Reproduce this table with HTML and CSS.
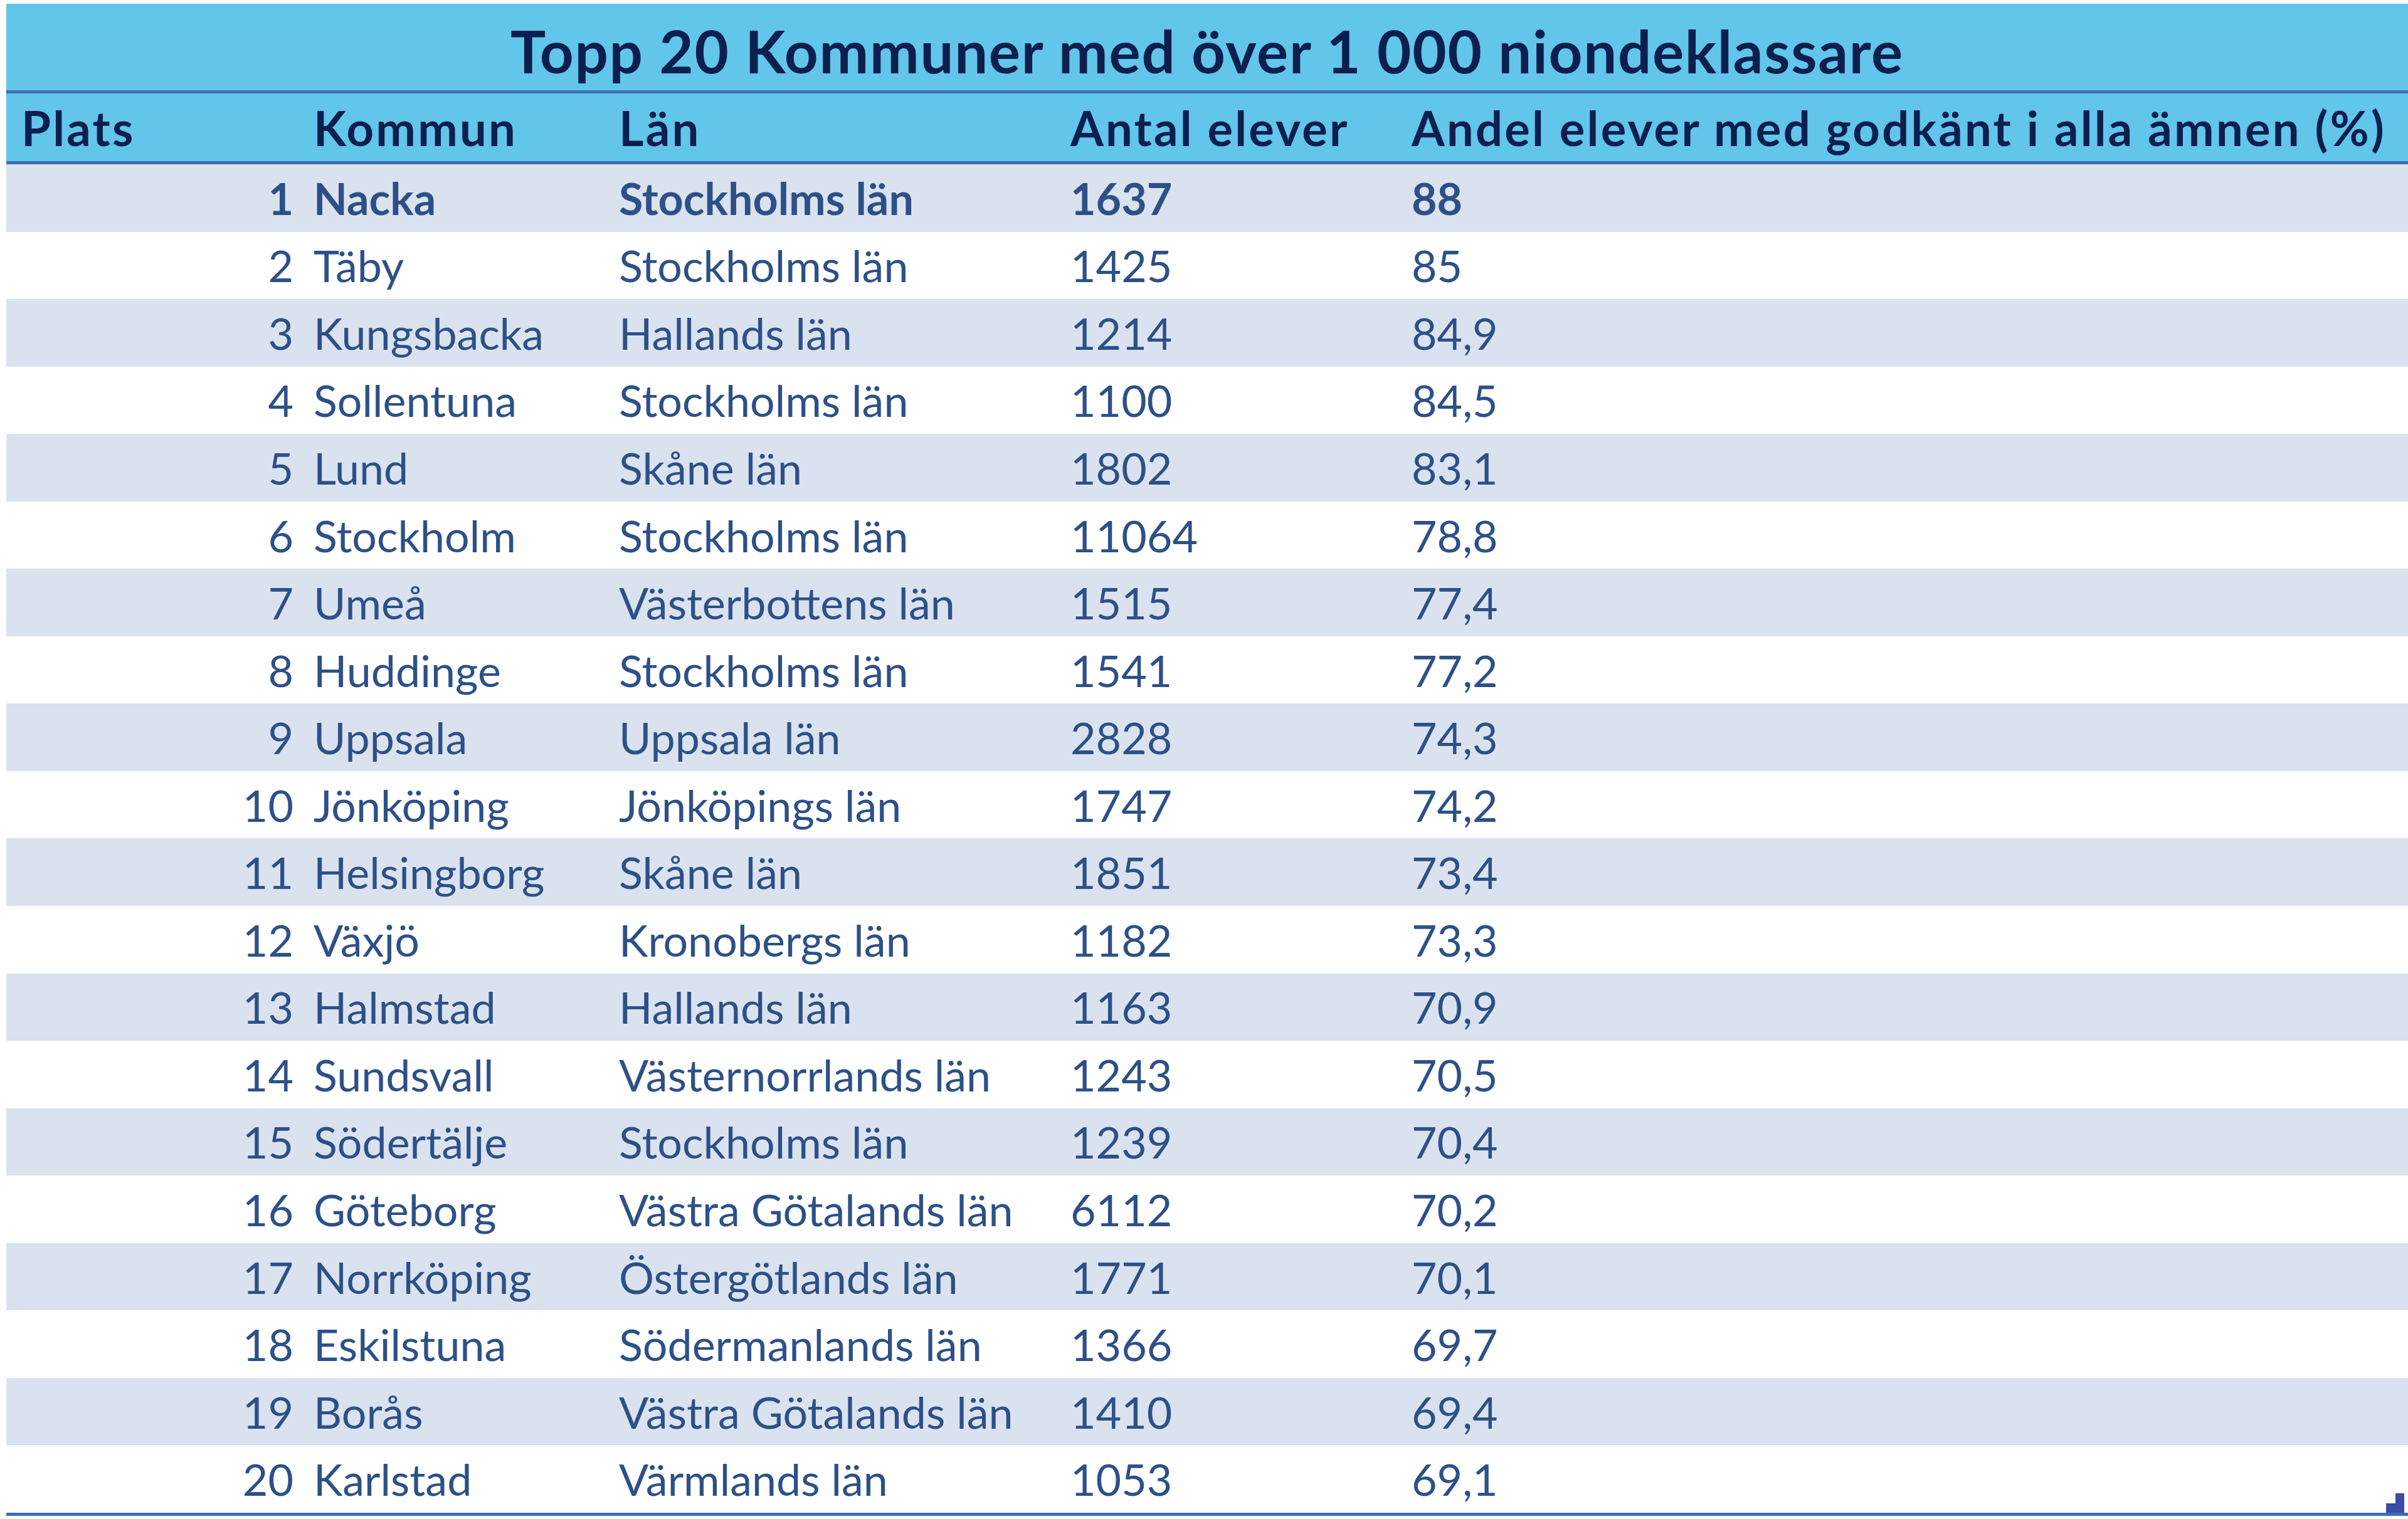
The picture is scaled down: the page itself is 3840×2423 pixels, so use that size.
FILE: index.html
```html
<!DOCTYPE html>
<html lang="sv">
<head>
<meta charset="utf-8">
<title>Topp 20 Kommuner med över 1 000 niondeklassare</title>
<link rel="stylesheet" href="styles.css">
</head>
<body>
<div class="sheet">
  <div class="title">Topp 20 Kommuner med över 1 000 niondeklassare</div>
  <div class="row head">
    <div class="cell plats">Plats</div>
    <div class="cell">Kommun</div>
    <div class="cell">Län</div>
    <div class="cell">Antal elever</div>
    <div class="cell">Andel elever med godkänt i alla ämnen (%)</div>
  </div>
  <div class="row band strong"><div class="cell num">1</div><div class="cell">Nacka</div><div class="cell">Stockholms län</div><div class="cell">1637</div><div class="cell">88</div></div>
  <div class="row"><div class="cell num">2</div><div class="cell">Täby</div><div class="cell">Stockholms län</div><div class="cell">1425</div><div class="cell">85</div></div>
  <div class="row band"><div class="cell num">3</div><div class="cell">Kungsbacka</div><div class="cell">Hallands län</div><div class="cell">1214</div><div class="cell">84,9</div></div>
  <div class="row"><div class="cell num">4</div><div class="cell">Sollentuna</div><div class="cell">Stockholms län</div><div class="cell">1100</div><div class="cell">84,5</div></div>
  <div class="row band"><div class="cell num">5</div><div class="cell">Lund</div><div class="cell">Skåne län</div><div class="cell">1802</div><div class="cell">83,1</div></div>
  <div class="row"><div class="cell num">6</div><div class="cell">Stockholm</div><div class="cell">Stockholms län</div><div class="cell">11064</div><div class="cell">78,8</div></div>
  <div class="row band"><div class="cell num">7</div><div class="cell">Umeå</div><div class="cell">Västerbottens län</div><div class="cell">1515</div><div class="cell">77,4</div></div>
  <div class="row"><div class="cell num">8</div><div class="cell">Huddinge</div><div class="cell">Stockholms län</div><div class="cell">1541</div><div class="cell">77,2</div></div>
  <div class="row band"><div class="cell num">9</div><div class="cell">Uppsala</div><div class="cell">Uppsala län</div><div class="cell">2828</div><div class="cell">74,3</div></div>
  <div class="row"><div class="cell num">10</div><div class="cell">Jönköping</div><div class="cell">Jönköpings län</div><div class="cell">1747</div><div class="cell">74,2</div></div>
  <div class="row band"><div class="cell num">11</div><div class="cell">Helsingborg</div><div class="cell">Skåne län</div><div class="cell">1851</div><div class="cell">73,4</div></div>
  <div class="row"><div class="cell num">12</div><div class="cell">Växjö</div><div class="cell">Kronobergs län</div><div class="cell">1182</div><div class="cell">73,3</div></div>
  <div class="row band"><div class="cell num">13</div><div class="cell">Halmstad</div><div class="cell">Hallands län</div><div class="cell">1163</div><div class="cell">70,9</div></div>
  <div class="row"><div class="cell num">14</div><div class="cell">Sundsvall</div><div class="cell">Västernorrlands län</div><div class="cell">1243</div><div class="cell">70,5</div></div>
  <div class="row band"><div class="cell num">15</div><div class="cell">Södertälje</div><div class="cell">Stockholms län</div><div class="cell">1239</div><div class="cell">70,4</div></div>
  <div class="row"><div class="cell num">16</div><div class="cell">Göteborg</div><div class="cell">Västra Götalands län</div><div class="cell">6112</div><div class="cell">70,2</div></div>
  <div class="row band"><div class="cell num">17</div><div class="cell">Norrköping</div><div class="cell">Östergötlands län</div><div class="cell">1771</div><div class="cell">70,1</div></div>
  <div class="row"><div class="cell num">18</div><div class="cell">Eskilstuna</div><div class="cell">Södermanlands län</div><div class="cell">1366</div><div class="cell">69,7</div></div>
  <div class="row band"><div class="cell num">19</div><div class="cell">Borås</div><div class="cell">Västra Götalands län</div><div class="cell">1410</div><div class="cell">69,4</div></div>
  <div class="row last"><div class="cell num">20</div><div class="cell">Karlstad</div><div class="cell">Värmlands län</div><div class="cell">1053</div><div class="cell">69,1</div></div>
  <svg class="handle" width="29" height="31" viewBox="0 0 29 31" aria-hidden="true"><path d="M0 16 H15 V0 H29 V31 H0 Z" fill="#3a4aa6"/></svg>
</div>
</body>
</html>
```

FILE: styles.css
```css
html, body {
  margin: 0;
  padding: 0;
  background: #ffffff;
}

body {
  font-family: "Lato", "Open Sans", sans-serif;
  overflow: hidden;
}

.sheet {
  position: relative;
  margin: 6px 0 0 10px;
}

.title {
  height: 143px;
  box-sizing: border-box;
  padding-top: 10px;
  display: flex;
  align-items: center;
  justify-content: center;
  background: #62c5ea;
  color: #0c1f4e;
  font-weight: 700;
  font-size: 94px;
  letter-spacing: 1.7px;
  border-bottom: 5px solid #3d6db5;
}

.row {
  display: grid;
  grid-template-columns: 470px 498px 720px 544px 1fr;
  height: 107.55px;
  align-items: center;
  color: #2d5088;
  font-size: 70px;
}

.row.head {
  height: 113px;
  box-sizing: border-box;
  background: #62c5ea;
  color: #0c1f4e;
  font-weight: 700;
  font-size: 76px;
  letter-spacing: 3.2px;
  border-bottom: 5px solid #3d6db5;
}

.row.band {
  background: #d9e2ee;
}

.row.strong {
  font-weight: 700;
}

.row.last {
  height: 113px;
  box-sizing: border-box;
  border-bottom: 5px solid #3d6db5;
}

.cell {
  padding-left: 9px;
  white-space: nowrap;
}

.cell:nth-child(2) {
  padding-left: 20px;
}

.cell.plats {
  padding-left: 24px;
}

.cell.num {
  text-align: right;
  padding-right: 12px;
}

.handle {
  position: absolute;
  right: 6px;
  bottom: 5px;
  display: block;
}
```
